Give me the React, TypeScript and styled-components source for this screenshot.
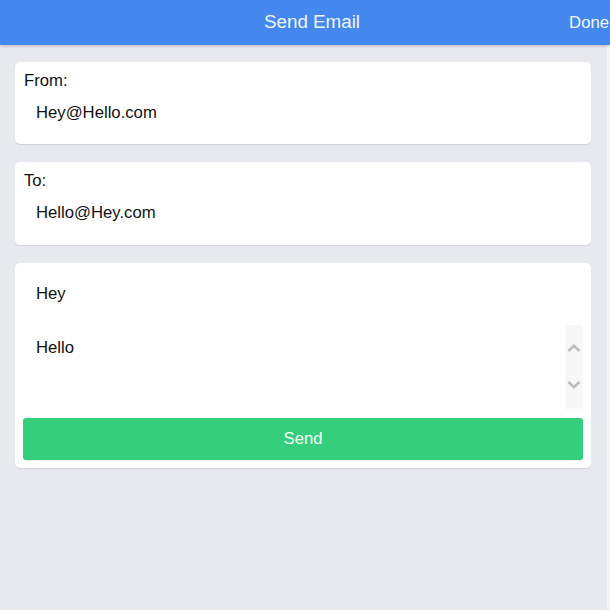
import React from "react";
import styled, { createGlobalStyle } from "styled-components";

const Global = createGlobalStyle`
  html, body { margin: 0; padding: 0; height: 100%; }
  body {
    background: #f4f4f6;
    font-family: "Liberation Sans", Arial, sans-serif;
    overflow: hidden;
  }
  #root { height: 100%; }
`;

const Page = styled.div`
  height: 100%;
  display: flex;
  flex-direction: column;
`;

const Header = styled.header`
  position: relative;
  z-index: 1;
  height: 45px;
  flex-shrink: 0;
  background: #4387ef;
  box-shadow: 0 1px 3px rgba(0, 0, 0, 0.22);
  display: grid;
  grid-template-columns: 1fr auto 1fr;
  align-items: center;
  color: #f2f6ff;
`;

const Title = styled.h1`
  grid-column: 2;
  margin: 0 0 2px;
  font-size: 18.8px;
  font-weight: normal;
  line-height: 43px;
  padding-left: 14px;
`;

const Done = styled.button`
  grid-column: 3;
  justify-self: end;
  background: none;
  border: none;
  padding: 0 1px 0 0;
  color: #f2f6ff;
  font-family: inherit;
  font-size: 16.7px;
  line-height: 45px;
`;

const Main = styled.main`
  flex: 1;
  background: #e8e9ee;
  margin-right: 3px;
  padding: 17px 16px 0 15px;
  display: flex;
  flex-direction: column;
  gap: 18px;
`;

const Card = styled.section`
  background: #fff;
  border-radius: 5px;
  box-shadow: 0 1px 1px rgba(0, 0, 0, 0.09);
  padding: 8px;
  display: flex;
  flex-direction: column;
`;

const Label = styled.div`
  font-size: 16.7px;
  line-height: 20px;
  color: #111;
  padding: 1px 0 0 1px;
  height: 20px;
  box-sizing: border-box;
`;

const Field = styled.div<{ $h: number; $pb?: number }>`
  height: ${(p) => p.$h}px;
  box-sizing: border-box;
  display: flex;
  align-items: center;
  padding: 2px 0 0 13px;
  font-size: 16.7px;
  color: #111;
  margin-bottom: ${(p) => p.$pb ?? 0}px;
`;

const BodyArea = styled.div`
  margin-top: 10px;
  height: 84px;
  display: flex;
`;

const BodyText = styled.div`
  flex: 1;
  padding: 13px 0 0 13px;
  font-size: 16.7px;
  line-height: 20px;
  color: #111;
`;

const ScrollBar = styled.div`
  width: 18px;
  background: #f7f7f8;
  display: flex;
  flex-direction: column;
  align-items: center;
  justify-content: space-between;
  padding: 19px 0 20px;
  box-sizing: border-box;
`;

const SendButton = styled.button`
  margin-top: 9px;
  height: 42px;
  border: none;
  border-radius: 3px;
  background: #35ce7a;
  box-shadow: 0 1px 0 rgba(0, 0, 0, 0.06);
  color: #f4fff8;
  font-family: inherit;
  font-size: 16.7px;
`;

const Chevron = ({ up }: { up?: boolean }) => (
  <svg width="14" height="8" viewBox="0 0 14 8">
    <path
      d={up ? "M1.5 7 L7 1.8 L12.5 7" : "M1.5 1 L7 6.2 L12.5 1"}
      fill="none"
      stroke="#bdbdbf"
      strokeWidth="2.6"
    />
  </svg>
);

export default function App() {
  return (
    <Page>
      <Global />
      <Header>
        <Title>Send Email</Title>
        <Done>Done</Done>
      </Header>
      <Main>
        <Card>
          <Label>From:</Label>
          <Field $h={44} $pb={2}>Hey@Hello.com</Field>
        </Card>
        <Card>
          <Label>To:</Label>
          <Field $h={44} $pb={3}>Hello@Hey.com</Field>
        </Card>
        <Card>
          <Field $h={44}>Hey</Field>
          <BodyArea>
            <BodyText>Hello</BodyText>
            <ScrollBar>
              <Chevron up />
              <Chevron />
            </ScrollBar>
          </BodyArea>
          <SendButton>Send</SendButton>
        </Card>
      </Main>
    </Page>
  );
}
